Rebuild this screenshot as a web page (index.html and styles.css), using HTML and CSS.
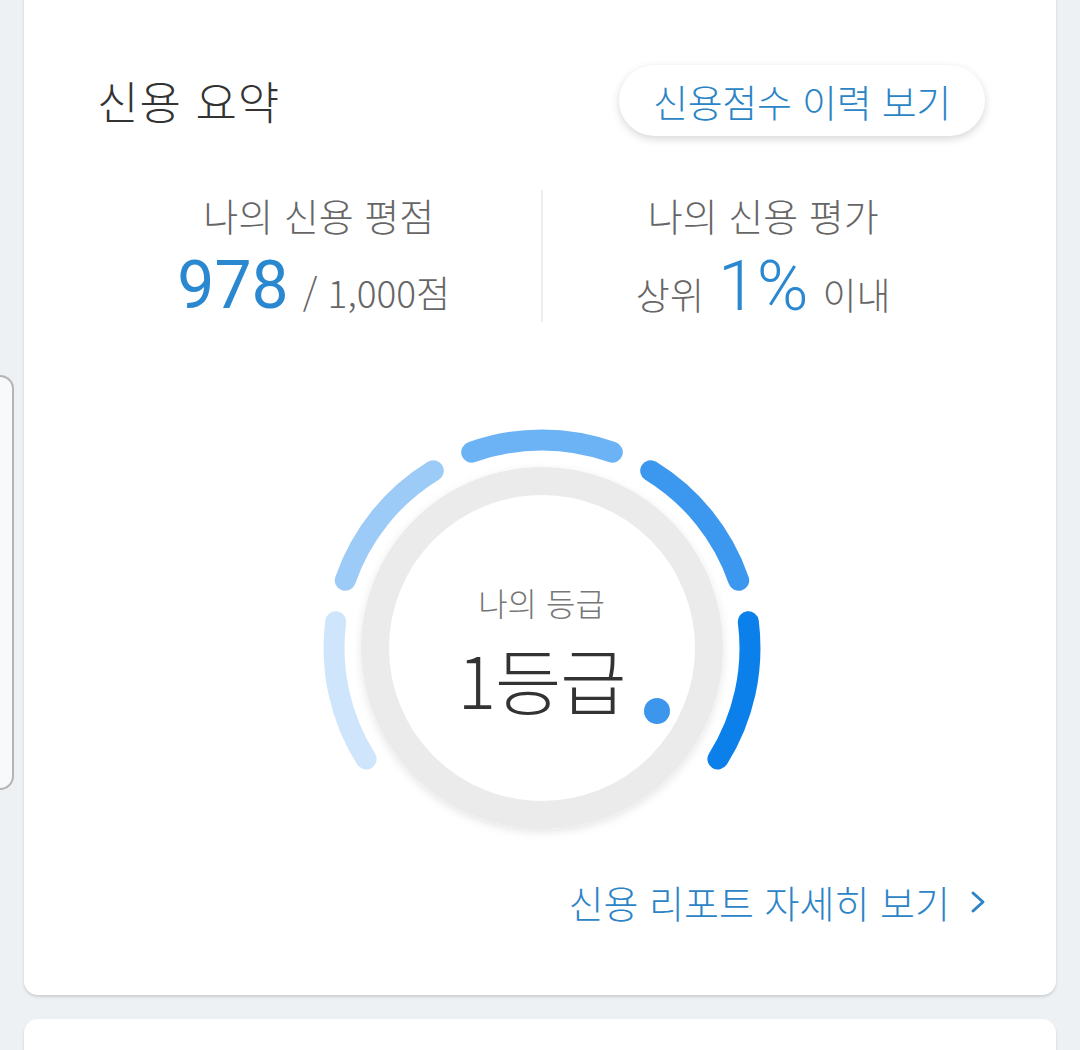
FILE: index.html
```html
<!DOCTYPE html>
<html lang="ko">
<head>
<meta charset="utf-8">
<title>신용 요약</title>
<link rel="stylesheet" href="styles.css">
</head>
<body>
<div class="peek"></div>
<main class="page">
  <section class="card">
    <header class="card-head">
      <h1 class="title">신용 요약</h1>
      <button class="pill">신용점수 이력 보기</button>
    </header>

    <div class="stats">
      <div class="stat">
        <div class="stat-label">나의 신용 평점</div>
        <div class="stat-value"><span class="num">978</span><span class="unit">/ 1,000점</span></div>
      </div>
      <div class="stat">
        <div class="stat-label">나의 신용 평가</div>
        <div class="stat-value"><span class="unit">상위</span><span class="num pct">1%</span><span class="unit">이내</span></div>
      </div>
    </div>

    <div class="gauge">
      <svg class="gauge-svg" width="460" height="430" viewBox="0 0 460 430">
        <defs>
          <filter id="soft" x="-20%" y="-20%" width="140%" height="140%">
            <feDropShadow dx="0" dy="3" stdDeviation="4" flood-color="#000" flood-opacity="0.10"/>
          </filter>
        </defs>
        <g fill="none" stroke-width="21" stroke-linecap="round">
          <path d="M54.1 341.0 A208 208 0 0 1 23.7 203.7" stroke="#cfe5fb"/>
          <path d="M33.3 162.3 A208 208 0 0 1 121.3 52.7" stroke="#9dcbf7"/>
          <path d="M159.7 34.2 A208 208 0 0 1 300.3 34.2" stroke="#6bb3f4"/>
          <path d="M338.7 52.7 A208 208 0 0 1 426.7 162.3" stroke="#3b98ee"/>
          <path d="M436.3 203.7 A208 208 0 0 1 405.9 341.0" stroke="#0c80ea"/>
        </g>
        <circle cx="230" cy="230" r="167" fill="#fff" stroke="#ebebeb" stroke-width="28" filter="url(#soft)"/>
        <circle cx="345" cy="293" r="13" fill="#3b96ec"/>
      </svg>
      <div class="gauge-text">
        <div class="gauge-label">나의 등급</div>
        <div class="gauge-grade">1등급</div>
      </div>
    </div>

    <div class="more">
      <a class="more-link" href="#">신용 리포트 자세히 보기
        <svg class="chev" width="16" height="26" viewBox="0 0 16 26"><polyline points="3,4 13,13 3,22" fill="none" stroke="#2c84c7" stroke-width="3" stroke-linecap="round" stroke-linejoin="round"/></svg>
      </a>
    </div>
  </section>
  <section class="card card-next"></section>
</main>
</body>
</html>
```
FILE: styles.css
```css
html, body {
  margin: 0;
  padding: 0;
}
body {
  background: #eef1f4;
  font-family: "Noto Sans CJK KR", "Noto Sans", sans-serif;
  font-weight: 300;
  width: 1080px;
  height: 1050px;
  overflow: hidden;
  position: relative;
}
.peek {
  position: absolute;
  left: 0;
  top: 375px;
  width: 12px;
  height: 411px;
  background: #f7f9fb;
  border: 2px solid #b4b4b4;
  border-left: none;
  border-radius: 0 14px 14px 0;
}
.page {
  display: flex;
  flex-direction: column;
  gap: 24px;
  padding: 0 24px;
  margin-top: -30px;
}
.card {
  background: #fff;
  border-radius: 14px;
  box-shadow: 0 2px 3px rgba(0,0,0,0.14);
  padding: 95px 70px 68px 73px;
  display: flex;
  flex-direction: column;
}
.card-next {
  height: 200px;
  padding: 0;
}
.card-head {
  display: flex;
  align-items: center;
  justify-content: space-between;
  height: 71px;
  margin-right: 2px;
}
.title {
  margin: 0;
  font-size: 45px;
  font-weight: 300;
  color: #333;
  letter-spacing: 1px;
}
.pill {
  font-family: inherit;
  font-weight: 300;
  height: 71px;
  width: 366px;
  margin-right: -1px;
  border: none;
  border-radius: 36px;
  background: #fff;
  box-shadow: 0 3px 9px rgba(0,0,0,0.16);
  color: #2b84c6;
  font-size: 38px;
  padding: 0;
  letter-spacing: -0.3px;
}
.stats {
  margin-top: 54px;
  display: grid;
  grid-template-columns: 1fr 1fr;
  height: 132px;
  margin-right: 2px;
}
.stat {
  display: flex;
  flex-direction: column;
  align-items: center;
  height: 132px;
}
.stat:first-child {
  padding-right: 10px;
}
.stat + .stat {
  border-left: 2px solid #eeeeee;
}
.stat-label {
  font-size: 38px;
  color: #666;
  line-height: 50px;
  letter-spacing: 0;
}
.stat:first-child .stat-label {
  margin-left: 10px;
}
.stat-value {
  display: flex;
  align-items: baseline;
  gap: 14px;
  line-height: 72px;
  margin-top: 10px;
}
.num {
  font-family: "Roboto", sans-serif;
  font-weight: 400;
  font-size: 66px;
  color: #2a88d0;
  letter-spacing: 0;
}
.pct {
  font-weight: 300;
  font-size: 70px;
}
.unit {
  font-size: 37px;
  color: #666;
}
.gauge {
  margin-top: 96px;
  align-self: center;
  position: relative;
  width: 460px;
  height: 430px;
}
.gauge-svg {
  display: block;
}
.gauge-text {
  position: absolute;
  left: 0;
  right: 0;
  top: 160px;
  display: flex;
  flex-direction: column;
  align-items: center;
}
.gauge-label {
  font-size: 32px;
  color: #777;
  line-height: 48px;
}
.gauge-grade {
  font-size: 72px;
  color: #333;
  line-height: 104px;
  letter-spacing: -1px;
}
.more {
  margin-top: 29px;
  display: flex;
  justify-content: flex-end;
}
.more-link {
  display: flex;
  align-items: center;
  gap: 20px;
  font-size: 38px;
  line-height: 50px;
  color: #2c84c7;
  text-decoration: none;
  letter-spacing: 0;
}
.chev {
  display: block;
}
```
